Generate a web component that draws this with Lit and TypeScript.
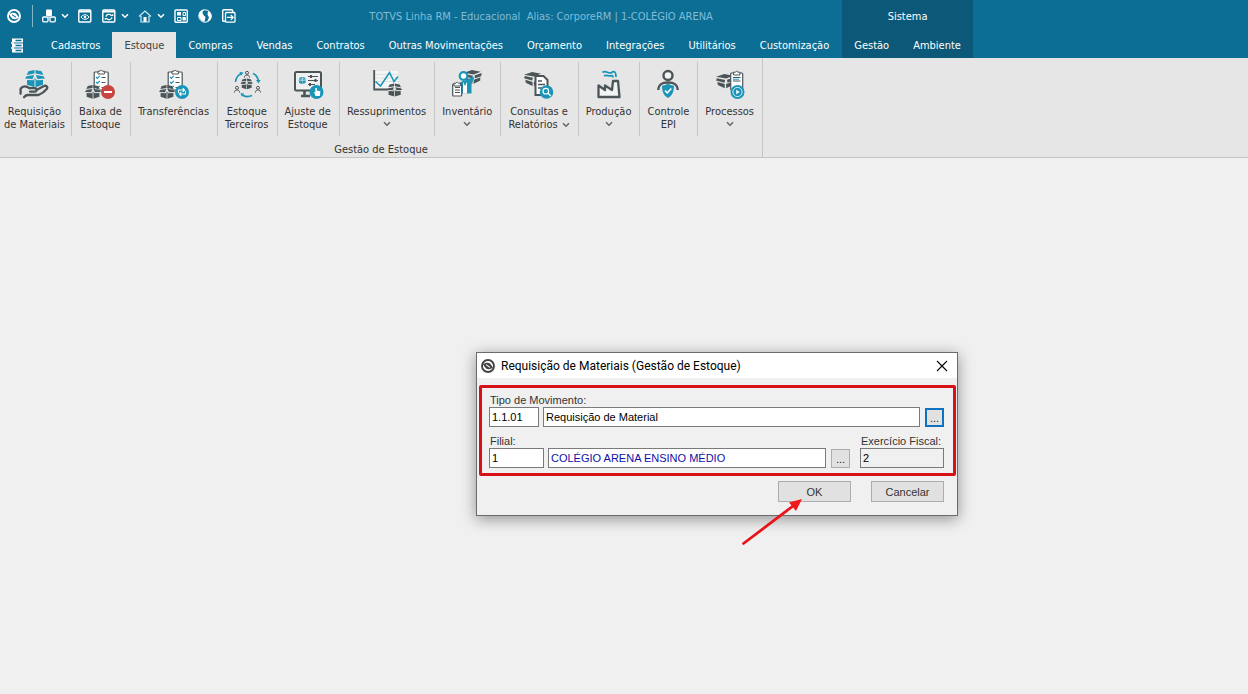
import { LitElement, html, svg, css, nothing, TemplateResult } from "lit";
import { customElement, property } from "lit/decorators.js";
import { classMap } from "lit/directives/class-map.js";

type Drawing = TemplateResult | TemplateResult<2>;

const DARK = "#4b5558";
const BLUE = "#1a95b8";

const box = (x: number, y: number, scale: number, color: string) => svg`
  <path transform="translate(${x} ${y}) scale(${scale})" fill=${color}
    d="M3.5 1.2 9.5 0V3.6L1.6 5ZM16.5 1.2 10.5 0V3.6L18.4 5ZM1.6 6.2 9.2 4.9 7.5 9 0 8.6ZM18.4 6.2 10.8 4.9 12.5 9 20 8.6ZM2 10 8.3 10.2 9.5 7.8V17.2L2 14.8ZM18 10 11.7 10.2 10.5 7.8V17.2L18 14.8Z"/>`;

const tiltedBox = (x: number, y: number, scale: number) => svg`
  <path transform="translate(${x} ${y}) scale(${scale})" fill=${DARK}
    d="M0 3 9 0 19 2 11 5ZM1 4.5 10 6.5 9 9.5 0 7ZM12 6.3 20 3.5 19.5 7 12.5 9.5ZM1.5 8.7 9.5 11V15.5L2 12ZM11 11 18.5 8.5V12L11 15.5Z"/>`;

const clipboard = (x: number, y: number, w: number, h: number) => svg`
  <g transform="translate(${x} ${y})">
    <rect x=".7" y="2" width=${w} height=${h} rx="1" fill="#fff" stroke=${DARK} stroke-width="1.2"/>
    <path d="M${w / 2 - 2.5} 1.2h2l1.2-1.2 1.2 1.2h2V4h-6.4Z" fill="#fff" stroke=${DARK} stroke-width="1"/>
  </g>`;

const checkLines = (x: number, y: number) => svg`
  <path d="M${x} ${y}l1.4 1.4 2.4-2.6M${x} ${y + 5}l1.4 1.4 2.4-2.6M${x} ${y + 10}l1.4 1.4 2.4-2.6" fill="none" stroke=${BLUE} stroke-width="1.2"/>
  <path d="M${x + 5.5} ${y + 0.5}h4M${x + 5.5} ${y + 5.5}h4M${x + 5.5} ${y + 10.5}h4" stroke=${DARK} stroke-width="1"/>`;

const person = (x: number, y: number) => svg`
  <g transform="translate(${x} ${y})" fill="none" stroke=${DARK} stroke-width="1">
    <circle cx="3" cy="1.8" r="1.5"/><path d="M.4 6.6C.6 4.6 1.4 4 3 4s2.4.6 2.6 2.6"/>
  </g>`;

const ribbonIcons: Record<string, Drawing> = {
  request: svg`
    ${box(7, 2, 1, BLUE)}
    <path d="M2.8 20.5C5 17.2 8.5 18 11.5 20.2h5.2c2.4.1 2.3 3.3 0 3.4H12M18.5 22l7-3.8c2.7-1.2 4.8.6 3.2 2.8-2 2.4-5.2 4.8-8.2 6H10c-2-.2-2.6.6-4 2.2M2.6 20.8v5" fill="none" stroke=${DARK} stroke-width="2.3" stroke-linecap="round" stroke-linejoin="round"/>`,
  writeOff: svg`
    ${clipboard(9.5, 2, 14, 18)}${checkLines(12, 9)}
    ${box(1, 17, 0.8, DARK)}
    <circle cx="24" cy="24" r="7" fill="#c8463f"/><path d="M20 24h8" stroke="#fff" stroke-width="2"/>`,
  transfer: svg`
    ${clipboard(9.5, 2, 14, 18)}${checkLines(12, 9)}
    ${box(1, 17, 0.8, DARK)}
    <circle cx="24" cy="24" r="7" fill=${BLUE}/>
    <path d="M20.5 25v-3h5.5M24.8 20.2l1.7 1.8-1.7 1.8M27.5 23v3H22M23.2 24.2l-1.7 1.8 1.7 1.8" fill="none" stroke="#fff" stroke-width="1.1"/>`,
  thirdParty: svg`
    ${box(9.5, 10.5, 0.62, DARK)}
    ${person(13, 3)}${person(3, 18)}${person(24, 18)}
    <path d="M4.5 14C4.8 9.5 7 7 10.5 5.5M22 5.5c3.5 1.5 5 4 5.4 8M21 27.5c-3.2 1.4-7 1.4-10-.5" fill="none" stroke=${BLUE} stroke-width="1.6"/>
    <path d="M8.5 4l4 .5-2.5 3.2ZM25 12h4.6l-2 3.4ZM9.3 25.3l4 .1-2.4 3.2Z" fill=${BLUE}/>`,
  adjust: svg`
    <rect x="3" y="4" width="26" height="18.5" rx="1.5" fill="#eef0f0" stroke=${DARK} stroke-width="2"/>
    <path d="M12.5 23v4M9 28h9" stroke=${DARK} stroke-width="2.6"/>
    ${box(6.3, 9, 0.4, BLUE)}
    <path d="M16 8.5h10M16 12.5h10M16 16.5h7" stroke=${DARK} stroke-width="1.2"/>
    <path d="M19 7v3M23.5 11v3M18 15v3" stroke=${DARK} stroke-width="2"/>
    <circle cx="24.5" cy="24" r="7" fill=${BLUE}/>
    <path d="M23.3 20v4.5l-1.5-.6 1.8 4h4.2l.6-4.6-3.6-.9V20Z" fill="#fff"/>`,
  supply: svg`
    <path d="M4 3h23v17H4Z" fill="#f4f5f5"/>
    <path d="M4 6.5h23M4 10h23M4 13.5h23" stroke="#d2d6d8" stroke-width=".7"/>
    <path d="M3.2 2v19.5H17" fill="none" stroke=${DARK} stroke-width="1.8"/>
    <path d="M4.5 13.5 9.5 18l9-13.5 4.5 9 4-5" fill="none" stroke=${BLUE} stroke-width="1.5"/>
    ${box(16, 15.5, 0.76, DARK)}`,
  inventory: svg`
    ${tiltedBox(13, 2, 0.88)}
    <circle cx="12.5" cy="8" r="3.8" fill="#fff" stroke=${BLUE} stroke-width="2.2"/>
    <path d="M9 14.5C12 12 17 12.8 21.8 8.2L23.2 10C22 13 20.5 15 20.5 17v8.5H9Z" fill=${BLUE}/>
    <path d="M12 14l2 4 2-4.2v11.7h-4Z" fill="#fff"/>
    ${clipboard(1, 14, 9, 12)}
    <path d="M4 19.5h5M4 22h5M4 24.5h5" stroke=${DARK} stroke-width="1"/>`,
  reports: svg`
    ${tiltedBox(1, 4, 0.9)}
    <path d="M12.5 8h8l4 4v15h-12Z" fill="#fff" stroke=${DARK} stroke-width="2"/>
    <path d="M15 13h4M15 16.5h7M15 20h4" stroke=${DARK} stroke-width="1.6"/>
    <circle cx="23.5" cy="24" r="6.8" fill=${BLUE}/>
    <circle cx="22.8" cy="23.2" r="2.8" fill="none" stroke="#fff" stroke-width="1.2"/><path d="m25 25.2 2.8 2.8" stroke="#fff" stroke-width="1.3"/>`,
  production: svg`
    <path d="M5.5 29V17.5L12 22V17.5L19 22 20 13H25L26.5 29Z" fill="#f2f3f3" stroke=${DARK} stroke-width="2.3" stroke-linejoin="round"/>
    <path d="M9.5 4.5C13 1.5 15.5 7 19 4.2c2.5-1.5 4 0 4 4.8M11 8c2.5-2 4.8.8 7.5-.3 1-.4 1.4.3 1.4 1.8" fill="none" stroke=${BLUE} stroke-width="1.8"/>`,
  safety: svg`
    <circle cx="16" cy="7.5" r="4.5" fill="#f2f3f3" stroke=${DARK} stroke-width="2.4"/>
    <path d="M6.2 22C6.5 16 10 14.5 16 14.5s9.5 1.5 9.8 7.5" fill="none" stroke=${DARK} stroke-width="2.3"/>
    <path d="M16 15.5c2 1.6 4 2 6 2.2 0 6-1.8 9.8-6 12.3-4.2-2.5-6-6.3-6-12.3 2-.2 4-.6 6-2.2Z" fill=${BLUE}/>
    <path d="m13 22.5 2.3 2.3 4-4.3" fill="none" stroke="#fff" stroke-width="1.5"/>`,
  processes: svg`
    ${tiltedBox(2, 6, 0.92)}
    ${clipboard(16, 3, 12, 17)}
    <path d="M19 9.5h7.5M19 13h7.5" stroke=${DARK} stroke-width="1"/><path d="M19 11.2h6" stroke=${BLUE} stroke-width="1"/>
    <circle cx="23.5" cy="24" r="7" fill=${BLUE}/><circle cx="23.5" cy="24" r="4.6" fill="none" stroke="#d5eef4" stroke-width="1"/>
    <path d="m22.2 21.8 3.6 2.2-3.6 2.2Z" fill="#fff"/>`,
};

const chevron = html`<svg class="chevron" viewBox="0 0 8 6" width="8" height="6" aria-hidden="true">
  <path d="m1 1.2 3 3 3-3" fill="none" stroke="currentColor" stroke-width="1.5"/>
</svg>`;

const ringLogo = (color: string, ground: string) => html`<svg viewBox="0 0 16 16" width="16" height="16" aria-hidden="true">
  <circle cx="8" cy="8" r="6" fill="none" stroke=${color} stroke-width="1.9"/>
  <path d="M3 6.5C5 4.6 8 4.2 10 5.5L13 9.5C11 11.4 8 11.7 6 10.5Z" fill=${color}/>
  <path d="M6 6.6 10 9.4" stroke=${ground} stroke-width="1.1"/>
</svg>`;

const quickIcons: Record<string, Drawing> = {
  modules: svg`<rect x="5" y="1.5" width="6" height="6.5" rx="1" fill="#fff"/><path d="M8 8v2" stroke="#fff"/>
    <rect x="1.7" y="9" width="5.3" height="4.8" rx="1" fill="none" stroke="#fff" stroke-width="1.3"/><rect x="9" y="9" width="5.3" height="4.8" rx="1" fill="none" stroke="#fff" stroke-width="1.3"/>`,
  view: svg`<rect x="1.8" y="2" width="12" height="12" rx="1" fill="none" stroke="#fff" stroke-width="1.4"/><path d="M2 3.5h12" stroke="#fff" stroke-width="2"/>
    <path d="M4 9c2-3 6-3 8 0-2 3-6 3-8 0Z" fill="none" stroke="#fff"/><circle cx="8" cy="9" r="1.3" fill="#fff"/>`,
  refresh: svg`<rect x="1.8" y="2" width="12" height="12" rx="1" fill="none" stroke="#fff" stroke-width="1.4"/><path d="M2 3.5h12" stroke="#fff" stroke-width="2"/>
    <path d="M5 8.8C5.2 6 9.5 5.5 10.7 8M11 9.2c-.2 2.8-4.5 3.3-5.7.8" fill="none" stroke="#fff" stroke-width="1.2"/><path d="M9.3 8h3V5.8ZM6.7 10h-3v2.2Z" fill="#fff"/>`,
  home: svg`<path d="M2 8.5 8 3l6 5.5M4 8v6h8V8" fill="none" stroke="#d5e9f2" stroke-width="1.2"/><rect x="6.5" y="9" width="3" height="5" fill="#fff"/>`,
  layout: svg`<rect x="2" y="2" width="12.3" height="12.3" rx="1" fill="none" stroke="#fff" stroke-width="1.4"/>
    <path d="M4 4h4v3.5H4ZM9.5 9h3.3v3.5H9.5Z" fill="#fff"/><path d="M10 4.5h2.5v3H10ZM4.5 9.5H8v3H4.5Z" fill="none" stroke="#fff"/>`,
  globe: svg`<circle cx="8" cy="8" r="6.2" fill="none" stroke="#fff" stroke-width="1"/>
    <path d="M2.5 4C4 2.3 5.5 1.8 7 1.8L5.5 4 6 6.5 8.5 9 7.5 13.8C3.5 13 .8 8.5 2.5 4ZM11 3c2.5 1 3.8 3.5 3.5 6-.5 2.5-2 4.500-4.500 5l2-4.500-1.500-3Z" fill="#fff"/>`,
  exit: svg`<rect x="1.7" y="1.7" width="10" height="11.5" rx="1" fill="none" stroke="#fff" stroke-width="1.4"/><rect x="4.5" y="4.5" width="9.5" height="9.7" rx="1" fill="#0c6e94" stroke="#fff" stroke-width="1.3"/>
    <path d="M6 9.4h6M9.8 7l2.4 2.4-2.4 2.4" fill="none" stroke="#fff" stroke-width="1.2"/>`,
};

@customElement("quick-access")
class QuickAccess extends LitElement {
  static styles = css`
    :host { display: flex; align-items: center; height: 32px; padding-left: 2px; color: #fff; }
    button { display: flex; align-items: center; gap: 4px; height: 24px; padding: 0 4px; border: 0; background: none; color: inherit; }
    .divider { width: 1px; height: 22px; margin: 0 4px 0 6px; background: #7fb4c9; }
    .buttons { display: flex; align-items: center; }
  `;

  private items = [
    { icon: "modules", label: "Módulos", menu: true },
    { icon: "view", label: "Visualizar", menu: false },
    { icon: "refresh", label: "Atualizar", menu: true },
    { icon: "home", label: "Início", menu: true },
    { icon: "layout", label: "Layout", menu: false },
    { icon: "globe", label: "Portal", menu: false },
    { icon: "exit", label: "Sair", menu: false },
  ];

  render() {
    return html`
      <button aria-label="TOTVS">${ringLogo("#fff", "#0c6e94")}</button>
      <span class="divider"></span>
      <div class="buttons">
        ${this.items.map((item) => html`
          <button aria-label=${item.label}>
            <svg viewBox="0 0 16 16" width="16" height="16" aria-hidden="true">${quickIcons[item.icon]}</svg>
            ${item.menu ? chevron : nothing}
          </button>`)}
      </div>`;
  }
}

@customElement("ribbon-item")
class RibbonItem extends LitElement {
  @property() icon = "";
  @property({ attribute: false }) lines: string[] = [];
  @property({ type: Boolean }) menu = false;

  static styles = css`
    :host { display: block; border-right: 1px solid #c4c4c4; }
    :host(:last-child) { border-right: 0; }
    button {
      display: flex; flex-direction: column; align-items: center; height: 74px; padding: 6px 8px 0 7px;
      border: 0; background: none; color: #333; font: inherit; line-height: 13px; white-space: nowrap;
    }
    :host(:first-child) button { padding: 6px 6px 0 4px; }
    .icon { display: block; margin-bottom: 5px; }
    .line { display: flex; align-items: center; gap: 4px; }
    .chevron { color: #666; }
    .below { display: flex; align-items: center; height: 11px; }
  `;

  render() {
    const last = this.lines.length - 1;
    return html`
      <button>
        <svg class="icon" viewBox="0 0 32 32" width="32" height="32" aria-hidden="true">${ribbonIcons[this.icon]}</svg>
        ${this.lines.map((line, i) => html`<span class="line">${line}${this.menu && i === 1 && i === last ? chevron : nothing}</span>`)}
        ${this.menu && last === 0 ? html`<span class="below">${chevron}</span>` : nothing}
      </button>`;
  }
}

@customElement("request-dialog")
class RequestDialog extends LitElement {
  static styles = css`
    :host {
      display: block; box-sizing: border-box; border: 1px solid #6b6b6b; background: #f0f0f0;
      box-shadow: 0 3px 14px rgba(0, 0, 0, 0.4); font: 11px/14px "Liberation Sans", Arial, sans-serif; color: #333;
    }
    .title { display: flex; align-items: center; gap: 5px; height: 25px; padding: 0 7px 0 3px; background: #fff; }
    .title h2 { flex: 1; margin: 0; font: 12px/16px Roboto, "Noto Sans", sans-serif; color: #000; }
    .close { display: flex; padding: 0; border: 0; background: none; }
    .fields { margin: 7px 1px 0 2px; padding: 5px 9px 5px 7px; border: 3px solid #d81018; border-radius: 2px; }
    .row { display: flex; align-items: flex-end; }
    .second { margin-top: 7px; }
    .field { display: flex; flex-direction: column; }
    .grow { flex: 1; min-width: 0; }
    .code { width: 50px; margin-right: 4px; }
    .branch { width: 55px; margin-right: 4px; }
    .fiscal { width: 84px; margin-left: 10px; }
    label { padding-left: 1px; white-space: nowrap; }
    input {
      box-sizing: border-box; width: 100%; height: 20px; padding: 0 2px; border: 1px solid #7a7a7a; border-radius: 0;
      background: #fff; color: #000; font: inherit;
    }
    .linked { color: #1010a8; }
    .readonly { background: #f0f0f0; }
    .more, .action { box-sizing: border-box; padding: 0; border: 1px solid #adadad; background: #e1e1e1; color: #222; font: inherit; }
    .more { width: 19px; height: 19px; margin-left: 5px; }
    .focused { border: 2px solid #0f72c0; }
    .actions { display: flex; justify-content: flex-end; gap: 20px; padding: 5px 13px 13px; }
    .action { width: 73px; height: 21px; color: #333; }
    .arrow { position: absolute; left: 264px; top: 143px; pointer-events: none; }
  `;

  render() {
    return html`
      <header class="title">
        ${ringLogo("#444", "#fff")}
        <h2>Requisição de Materiais (Gestão de Estoque)</h2>
        <button class="close" aria-label="Fechar">
          <svg viewBox="0 0 16 16" width="16" height="16"><path d="m3 3 10 10M13 3 3 13" stroke="#000" stroke-width="1.1"/></svg>
        </button>
      </header>
      <section class="fields">
        <div class="row">
          <div class="field code">
            <label for="type">Tipo de Movimento:</label>
            <input id="type" .value=${"1.1.01"}>
          </div>
          <div class="field grow"><input aria-label="Descrição do movimento" .value=${"Requisição de Material"}></div>
          <button class="more focused" aria-label="Procurar movimento">...</button>
        </div>
        <div class="row second">
          <div class="field branch">
            <label for="branch">Filial:</label>
            <input id="branch" .value=${"1"}>
          </div>
          <div class="field grow"><input class="linked" aria-label="Nome da filial" .value=${"COLÉGIO ARENA ENSINO MÉDIO"}></div>
          <button class="more" aria-label="Procurar filial">...</button>
          <div class="field fiscal">
            <label for="fiscal">Exercício Fiscal:</label>
            <input id="fiscal" class="readonly" readonly .value=${"2"}>
          </div>
        </div>
      </section>
      <footer class="actions">
        <button class="action">OK</button>
        <button class="action">Cancelar</button>
      </footer>
      <svg class="arrow" viewBox="0 0 64 52" width="64" height="52" aria-hidden="true">
        <path d="M2.5 47.5 52 10" stroke="#e8141a" stroke-width="2.8" stroke-linecap="round"/>
        <path d="M61 3 55 15 48 6.5Z" fill="#f01818"/>
      </svg>`;
  }
}

@customElement("app-root")
class AppRoot extends LitElement {
  @property() active = "Estoque";

  static styles = css`
    :host {
      display: flex; flex-direction: column; position: relative; min-height: 100vh; background: #f0f0f0;
      font: 11px/13px "DejaVu Sans Condensed", Tahoma, sans-serif; color: #333;
    }
    .header { display: flex; background: #0c6e94; }
    .main { display: grid; grid-template-columns: auto 1fr; padding-right: 1px; }
    .caption { display: flex; align-items: center; justify-content: center; height: 32px; margin: 0; font: inherit; color: #80bcd8; white-space: pre; }
    .tabs { display: flex; height: 26px; }
    .main .tabs { grid-column: 1 / -1; }
    .file { width: 39px; padding: 0 0 0 9px; border: 0; background: none; }
    .file svg { display: block; }
    .tab { padding: 0 12px; border: 0; background: none; color: #fff; font: inherit; white-space: nowrap; }
    .active { background: #e6e6e6; color: #444; }
    .context { background: #0c5878; }
    .context .caption { color: #fff; }
    .ribbon { display: flex; background: #e6e6e6; border-bottom: 1px solid #c4c4c4; }
    .group { border-right: 1px solid #c4c4c4; padding-top: 4px; }
    .items { display: flex; }
    .group-name { margin: 0; padding: 8px 0 1px; text-align: center; line-height: 12px; }
    .window { position: absolute; left: 476px; top: 352px; width: 482px; }
  `;

  private tabs = ["Cadastros", "Estoque", "Compras", "Vendas", "Contratos", "Outras Movimentações", "Orçamento", "Integrações", "Utilitários", "Customização"];

  private items = [
    { icon: "request", lines: ["Requisição", "de Materiais"], menu: false },
    { icon: "writeOff", lines: ["Baixa de", "Estoque"], menu: false },
    { icon: "transfer", lines: ["Transferências"], menu: false },
    { icon: "thirdParty", lines: ["Estoque", "Terceiros"], menu: false },
    { icon: "adjust", lines: ["Ajuste de", "Estoque"], menu: false },
    { icon: "supply", lines: ["Ressuprimentos"], menu: true },
    { icon: "inventory", lines: ["Inventário"], menu: true },
    { icon: "reports", lines: ["Consultas e", "Relatórios"], menu: true },
    { icon: "production", lines: ["Produção"], menu: true },
    { icon: "safety", lines: ["Controle", "EPI"], menu: false },
    { icon: "processes", lines: ["Processos"], menu: true },
  ];

  private tab(name: string) {
    return html`<button class=${classMap({ tab: true, active: name === this.active })}>${name}</button>`;
  }

  render() {
    return html`
      <header class="header">
        <div class="main">
          <quick-access></quick-access>
          <h1 class="caption">TOTVS Linha RM - Educacional  Alias: CorporeRM | 1-COLÉGIO ARENA</h1>
          <nav class="tabs">
            <button class="file" aria-label="Menu">
              <svg viewBox="0 0 16 16" width="16" height="16">
                <path d="M3 3.5h11M3 8.5h11M3 13.5h11" stroke="#fff" stroke-width="4"/>
                <path d="M6.5 3.5h6M6.5 8.5h6M6.5 13.5h6" stroke="#0c6e94" stroke-width="1.3"/>
                <path d="M2 6h3M2 11h3" stroke="#fff" stroke-width="1.5"/>
              </svg>
            </button>
            ${this.tabs.map((name) => this.tab(name))}
          </nav>
        </div>
        <div class="context">
          <h2 class="caption">Sistema</h2>
          <nav class="tabs">${["Gestão", "Ambiente"].map((name) => this.tab(name))}</nav>
        </div>
      </header>
      <section class="ribbon">
        <div class="group">
          <div class="items">
            ${this.items.map((item) => html`<ribbon-item .icon=${item.icon} .lines=${item.lines} .menu=${item.menu}></ribbon-item>`)}
          </div>
          <p class="group-name">Gestão de Estoque</p>
        </div>
      </section>
      <request-dialog class="window"></request-dialog>`;
  }
}
